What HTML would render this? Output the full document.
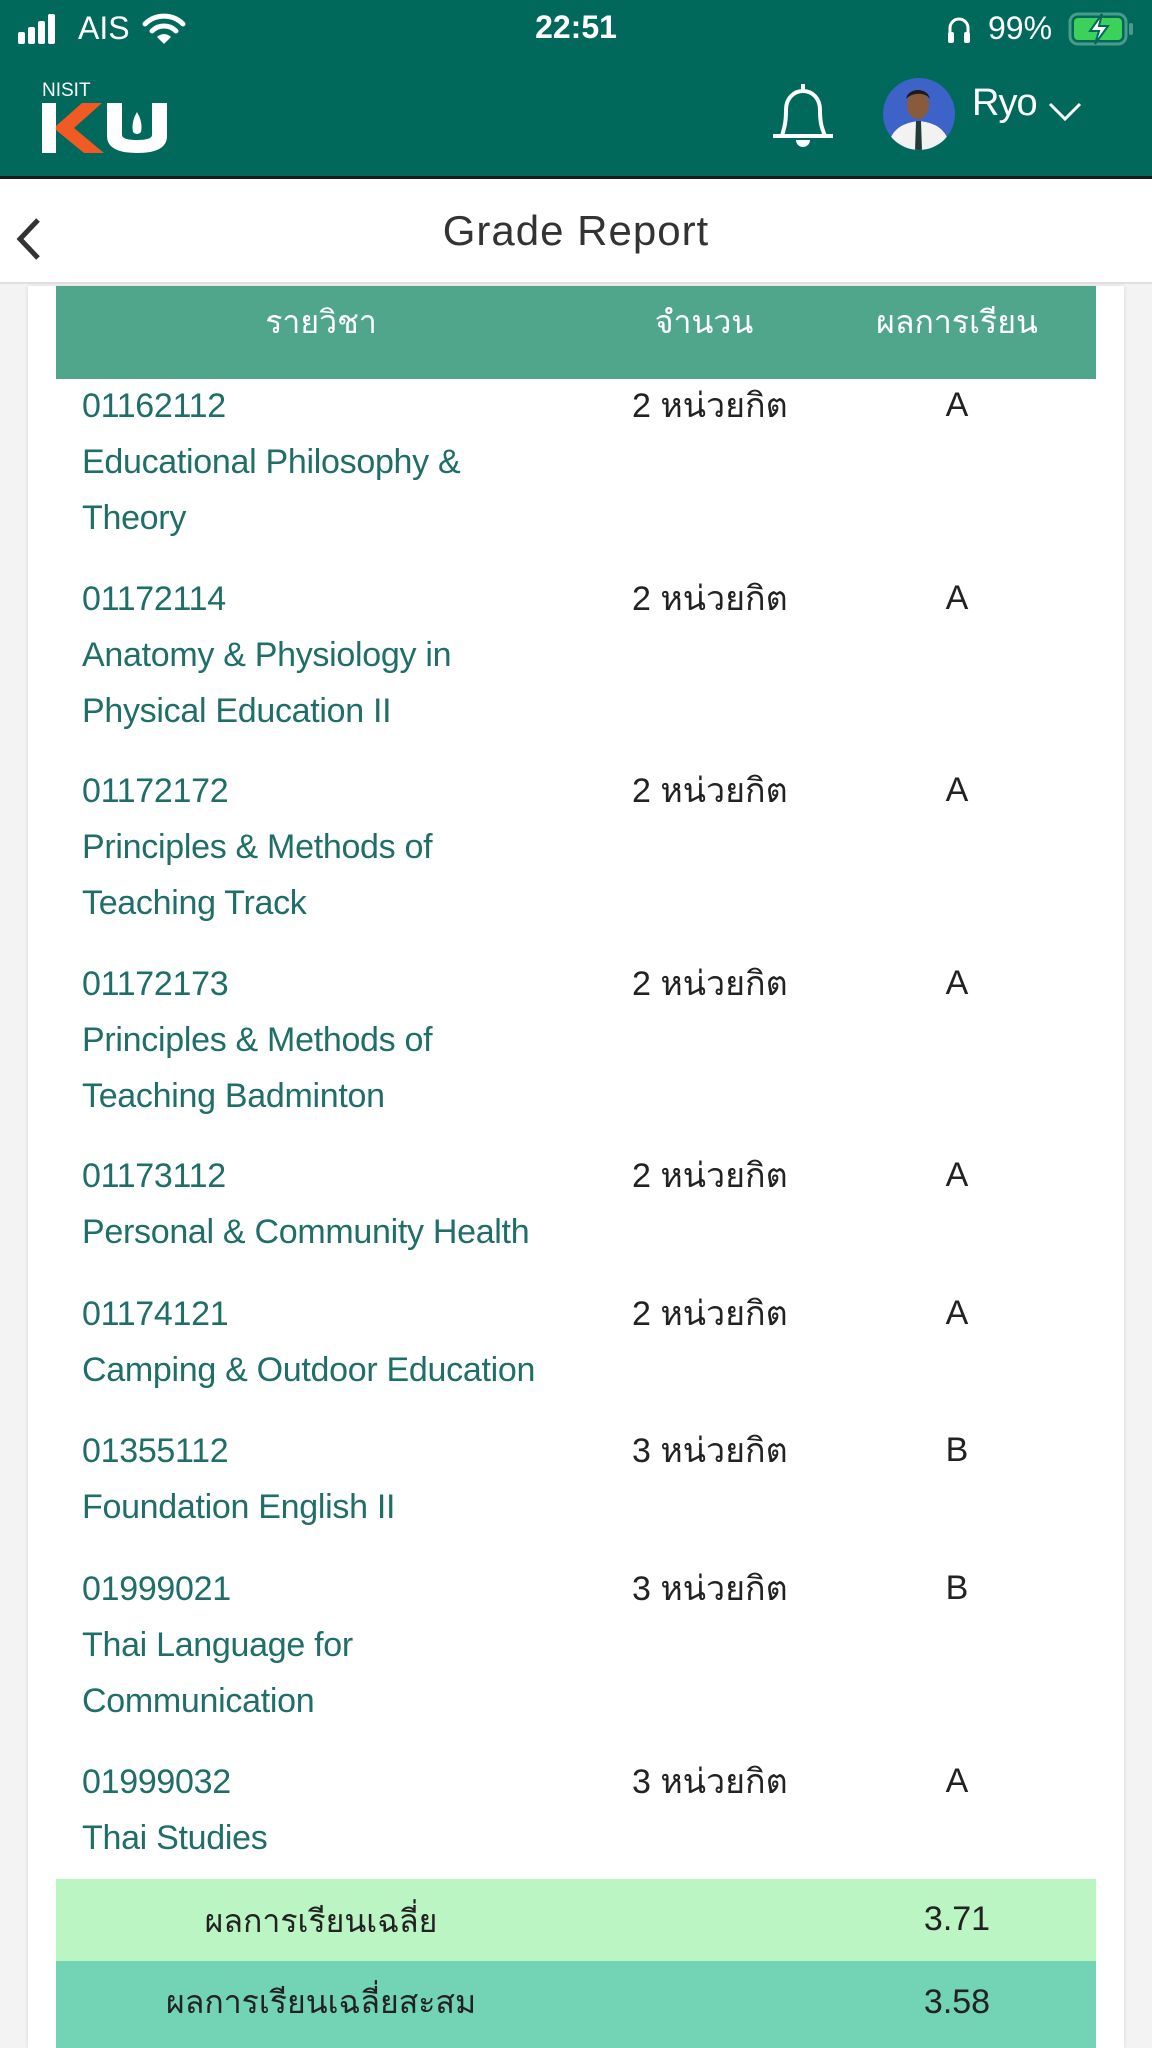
<!DOCTYPE html>
<html><head><meta charset="utf-8"><style>
*{margin:0;padding:0;box-sizing:border-box}
body{width:1152px;height:2048px;background:#f3f3f3;position:relative;overflow:hidden;font-family:"Liberation Sans","Noto Sans CJK SC",sans-serif}
.a{position:absolute;white-space:nowrap}
.c{color:#1f6e68;font-size:34px;left:82px;letter-spacing:-0.3px;margin-top:4px}
.k{color:#222;font-size:34px;left:632px;margin-top:-5px}
.g{color:#222;font-size:34px;left:937px;width:40px;text-align:center;margin-top:3px}
</style></head><body>
<div class="a" style="left:0;top:0;width:1152px;height:176px;background:#00695c"></div>
<div class="a" style="left:0;top:176px;width:1152px;height:3px;background:#1a1a1a"></div>
<svg class="a" style="left:18px;top:14px" width="50" height="30"><rect x="0" y="18" width="7" height="12" rx="2" fill="#fff"/><rect x="10" y="13" width="7" height="17" rx="2" fill="#fff"/><rect x="20" y="7" width="7" height="23" rx="2" fill="#fff"/><rect x="30" y="0" width="7" height="30" rx="2" fill="#fff"/></svg>
<div class="a" style="left:78px;top:10px;color:#fff;font-size:32px">AIS</div>
<svg class="a" style="left:142px;top:12px" width="44" height="34" viewBox="0 0 44 34"><path d="M3 12 A27 27 0 0 1 41 12" stroke="#fff" stroke-width="5" fill="none" stroke-linecap="round"/><path d="M10 19 A17 17 0 0 1 34 19" stroke="#fff" stroke-width="5" fill="none" stroke-linecap="round"/><path d="M22 32 L15 25 A10 10 0 0 1 29 25 Z" fill="#fff"/></svg>
<div class="a" style="left:530px;top:9px;color:#fff;font-size:32px;font-weight:bold;width:92px;text-align:center">22:51</div>
<svg class="a" style="left:946px;top:14px" width="26" height="30" viewBox="0 0 26 30"><path d="M4 24 V14 A9 9 0 0 1 22 14 V24" stroke="#fff" stroke-width="3" fill="none"/><rect x="2" y="18" width="6" height="11" rx="2" fill="#fff"/><rect x="18" y="18" width="6" height="11" rx="2" fill="#fff"/></svg>
<div class="a" style="left:988px;top:10px;color:#fff;font-size:32px">99%</div>
<svg class="a" style="left:1068px;top:11px" width="70" height="36" viewBox="0 0 70 36"><rect x="2" y="3" width="56" height="30" rx="8" stroke="#4a9b8a" stroke-width="3" fill="none"/><rect x="6" y="7" width="48" height="22" rx="4" fill="#3bd15a"/><rect x="61" y="12" width="4" height="12" rx="2" fill="#4a9b8a"/><path d="M34 3 L22 20 H31 L27 33 L40 15 H31 Z" fill="#fff" stroke="#00695c" stroke-width="2"/></svg>
<div class="a" style="left:42px;top:80px;color:#fff;font-size:19px">NISIT</div>
<svg class="a" style="left:40px;top:102px" width="132" height="52" viewBox="0 0 132 52"><rect x="2" y="1" width="14" height="50" fill="#fff"/><path d="M16 24 L42 1 H62 L34 26 L64 51 H44 L16 28 Z" fill="#f15a22"/><path d="M67 1 H82 V33 Q82 38 97 38 Q112 38 112 33 V1 H127 V34 Q127 51 97 51 Q67 51 67 34 Z" fill="#fff"/><path d="M97 10 Q91 20 93 30 Q97 34 101 30 Q103 20 97 10Z" fill="#fff"/></svg>
<svg class="a" style="left:768px;top:80px" width="70" height="72" viewBox="0 0 70 72"><path d="M35 4 V10 M14 56 C16 48 18 44 18 30 C18 18 26 11 35 11 C44 11 52 18 52 30 C52 44 54 48 57 56 Z" stroke="#fff" stroke-width="4" fill="none" stroke-linejoin="round"/><path d="M5 56 H65" stroke="#fff" stroke-width="4"/><path d="M28 60 A7 7 0 0 0 42 60 Z" fill="#fff"/></svg>
<svg class="a" style="left:882px;top:77px" width="74" height="74" viewBox="0 0 74 74"><defs><clipPath id="cp"><circle cx="37" cy="37" r="36"/></clipPath></defs><g clip-path="url(#cp)"><rect width="74" height="74" fill="#3d63c9"/><path d="M5 74 C8 52 20 46 37 44 C54 46 66 52 69 74Z" fill="#f2f2f2"/><ellipse cx="36" cy="28" rx="11" ry="14" fill="#8a5a3c"/><path d="M24 22 C26 10 46 10 48 22 C44 15 30 15 24 22Z" fill="#1c1a1a"/><path d="M34 44 L39 44 L40 74 L33 74Z" fill="#233a38"/></g></svg>
<div class="a" style="left:972px;top:82px;color:#fff;font-size:38px;letter-spacing:-1px">Ryo</div>
<svg class="a" style="left:1048px;top:100px" width="34" height="22" viewBox="0 0 34 22"><path d="M2 4 L17 19 L32 4" stroke="#fff" stroke-width="3" fill="none"/></svg>
<div class="a" style="left:0;top:179px;width:1152px;height:105px;background:#fff;border-bottom:2px solid #e0e0e0"></div>
<svg class="a" style="left:14px;top:216px" width="30" height="46" viewBox="0 0 30 46"><path d="M24 4 L6 23 L24 42" stroke="#333" stroke-width="5" fill="none"/></svg>
<div class="a" style="left:376px;top:207px;width:400px;text-align:center;font-size:42px;color:#333;letter-spacing:1px">Grade Report</div>
<div class="a" style="left:28px;top:286px;width:1096px;height:1762px;background:#fff;box-shadow:0 0 4px rgba(0,0,0,.12)"></div>
<div class="a" style="left:56px;top:286px;width:1040px;height:93px;background:#4fa68a"></div>
<div class="a" style="left:221px;top:297px;width:200px;text-align:center;color:#fff;font-size:32px">รายวิชา</div>
<div class="a" style="left:604px;top:297px;width:200px;text-align:center;color:#fff;font-size:32px">จำนวน</div>
<div class="a" style="left:857px;top:297px;width:200px;text-align:center;color:#fff;font-size:32px">ผลการเรียน</div>

<div class="a c" style="top:383px">01162112</div>
<div class="a c" style="top:439px">Educational Philosophy &amp;</div>
<div class="a c" style="top:495px">Theory</div>
<div class="a k" style="top:383px">2 หน่วยกิต</div><div class="a g" style="top:383px">A</div>

<div class="a c" style="top:576px">01172114</div>
<div class="a c" style="top:632px">Anatomy &amp; Physiology in</div>
<div class="a c" style="top:688px">Physical Education II</div>
<div class="a k" style="top:576px">2 หน่วยกิต</div><div class="a g" style="top:576px">A</div>

<div class="a c" style="top:768px">01172172</div>
<div class="a c" style="top:824px">Principles &amp; Methods of</div>
<div class="a c" style="top:880px">Teaching Track</div>
<div class="a k" style="top:768px">2 หน่วยกิต</div><div class="a g" style="top:768px">A</div>

<div class="a c" style="top:961px">01172173</div>
<div class="a c" style="top:1017px">Principles &amp; Methods of</div>
<div class="a c" style="top:1073px">Teaching Badminton</div>
<div class="a k" style="top:961px">2 หน่วยกิต</div><div class="a g" style="top:961px">A</div>

<div class="a c" style="top:1153px">01173112</div>
<div class="a c" style="top:1209px">Personal &amp; Community Health</div>
<div class="a k" style="top:1153px">2 หน่วยกิต</div><div class="a g" style="top:1153px">A</div>

<div class="a c" style="top:1291px">01174121</div>
<div class="a c" style="top:1347px">Camping &amp; Outdoor Education</div>
<div class="a k" style="top:1291px">2 หน่วยกิต</div><div class="a g" style="top:1291px">A</div>

<div class="a c" style="top:1428px">01355112</div>
<div class="a c" style="top:1484px">Foundation English II</div>
<div class="a k" style="top:1428px">3 หน่วยกิต</div><div class="a g" style="top:1428px">B</div>

<div class="a c" style="top:1566px">01999021</div>
<div class="a c" style="top:1622px">Thai Language for</div>
<div class="a c" style="top:1678px">Communication</div>
<div class="a k" style="top:1566px">3 หน่วยกิต</div><div class="a g" style="top:1566px">B</div>

<div class="a c" style="top:1759px">01999032</div>
<div class="a c" style="top:1815px">Thai Studies</div>
<div class="a k" style="top:1759px">3 หน่วยกิต</div><div class="a g" style="top:1759px">A</div>

<div class="a" style="left:56px;top:1879px;width:1040px;height:82px;background:#bbf5c4"></div>
<div class="a" style="left:56px;top:1961px;width:1040px;height:87px;background:#72d3b5"></div>
<div class="a" style="left:171px;top:1896px;width:300px;text-align:center;font-size:32px;color:#222">ผลการเรียนเฉลี่ย</div>
<div class="a" style="left:897px;top:1900px;width:120px;text-align:center;font-size:34px;color:#222">3.71</div>
<div class="a" style="left:141px;top:1977px;width:360px;text-align:center;font-size:32px;color:#222">ผลการเรียนเฉลี่ยสะสม</div>
<div class="a" style="left:897px;top:1983px;width:120px;text-align:center;font-size:34px;color:#222">3.58</div>
</body></html>
